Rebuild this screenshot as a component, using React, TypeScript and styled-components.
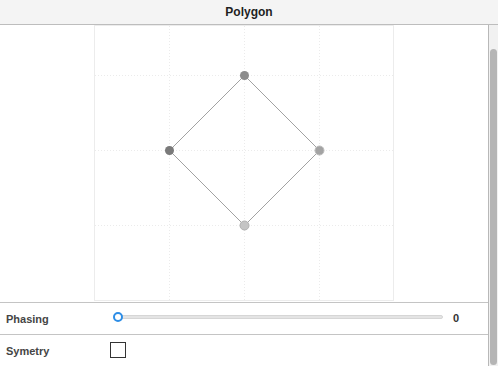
import React from "react";
import styled, { createGlobalStyle } from "styled-components";

const Global = createGlobalStyle`
  html, body { margin: 0; padding: 0; overflow: hidden; background: #fff; }
  body { font-family: "Liberation Sans", Arial, sans-serif; }
  #root { width: 498px; height: 366px; }
`;

const Frame = styled.div`
  width: 498px;
  height: 366px;
  display: flex;
  flex-direction: column;
  overflow: hidden;
`;

const Header = styled.div`
  height: 24px;
  flex: none;
  background: #f4f4f4;
  border-bottom: 1px solid #bdbdbd;
  display: flex;
  align-items: center;
  justify-content: center;
  font-size: 12px;
  font-weight: bold;
  color: #1f1f1f;
`;

const Body = styled.div`
  flex: 1;
  display: flex;
  min-height: 0;
`;

const Content = styled.div`
  flex: none;
  display: flex;
  flex-direction: column;
  border-right: 1px solid #b8b8b8;
  box-sizing: border-box;
  width: 489px;
`;

const Scroll = styled.div`
  flex: 1;
  background: #f1f1f1;
  display: flex;
  flex-direction: column;
  padding: 24px 1px 1px 1px;
`;

const Thumb = styled.div`
  flex: 1;
  background: #b5b5b5;
  border-radius: 4px;
`;

const CanvasArea = styled.div`
  height: 277px;
  flex: none;
  border-bottom: 1px solid #c4c4c4;
  display: flex;
  justify-content: center;
  align-items: flex-start;
`;

const Row = styled.div<{ $divider?: boolean }>`
  height: 31px;
  flex: none;
  display: grid;
  grid-template-columns: 107px 1fr 45px;
  align-items: center;
  padding-left: 6px;
  border-bottom: ${(p) => (p.$divider ? "1px solid #c4c4c4" : "none")};
`;

const Label = styled.div`
  font-size: 11px;
  font-weight: bold;
  color: #454545;
`;

const Slider = styled.div`
  position: relative;
  height: 10px;
  display: flex;
  align-items: center;
  padding-left: 5px;
  margin-top: -3px;
`;

const Track = styled.div`
  flex: 1;
  height: 4px;
  background: #e4e4e4;
  border: 1px solid #d6d6d6;
  border-radius: 3px;
  box-sizing: border-box;
`;

const Knob = styled.div`
  position: absolute;
  left: 0;
  top: 0;
  width: 10px;
  height: 10px;
  box-sizing: border-box;
  border: 2px solid #2d8de6;
  border-radius: 50%;
  background: #fff;
`;

const Value = styled.div`
  font-size: 11px;
  font-weight: bold;
  color: #333;
  padding-left: 10px;
  margin-top: -1px;
`;

const Check = styled.div`
  width: 16px;
  height: 16px;
  box-sizing: border-box;
  border: 1px solid #333;
  margin-left: -3px;
  margin-top: -2px;
`;

const grid = "#ebebeb";

function Plot() {
  const xs = [75, 150, 225];
  const ys = [50, 125, 200];
  return (
    <svg width="300" height="276" viewBox="0 0 300 276">
      <rect x="0.5" y="0.5" width="299" height="275" fill="#fff" stroke="#ececec" />
      {xs.map((x) => (
        <line key={"x" + x} x1={x + 0.5} y1={1} x2={x + 0.5} y2={275} stroke={grid} strokeDasharray="1 2" />
      ))}
      {ys.map((y) => (
        <line key={"y" + y} x1={1} y1={y + 0.5} x2={299} y2={y + 0.5} stroke={grid} strokeDasharray="1 2" />
      ))}
      <polygon
        points="150.5,50.5 225.5,125.5 150.5,200.5 75.5,125.5"
        fill="none"
        stroke="#8a8a8a"
        strokeWidth="0.8"
      />
      <circle cx="150.5" cy="50.5" r="4.5" fill="#8c8c8c" />
      <circle cx="75.5" cy="125.5" r="4.5" fill="#7a7a7a" />
      <circle cx="225.5" cy="125.5" r="4.5" fill="#a3a3a3" stroke="#bdbdbd" strokeWidth="1" />
      <circle cx="150.5" cy="200.5" r="4.5" fill="#c4c4c4" stroke="#b0b0b0" strokeWidth="1" />
    </svg>
  );
}

export default function App() {
  return (
    <Frame>
      <Global />
      <Header>Polygon</Header>
      <Body>
        <Content>
          <CanvasArea>
            <Plot />
          </CanvasArea>
          <Row $divider>
            <Label>Phasing</Label>
            <Slider>
              <Track />
              <Knob />
            </Slider>
            <Value>0</Value>
          </Row>
          <Row>
            <Label>Symetry</Label>
            <Check />
            <div />
          </Row>
        </Content>
        <Scroll>
          <Thumb />
        </Scroll>
      </Body>
    </Frame>
  );
}
